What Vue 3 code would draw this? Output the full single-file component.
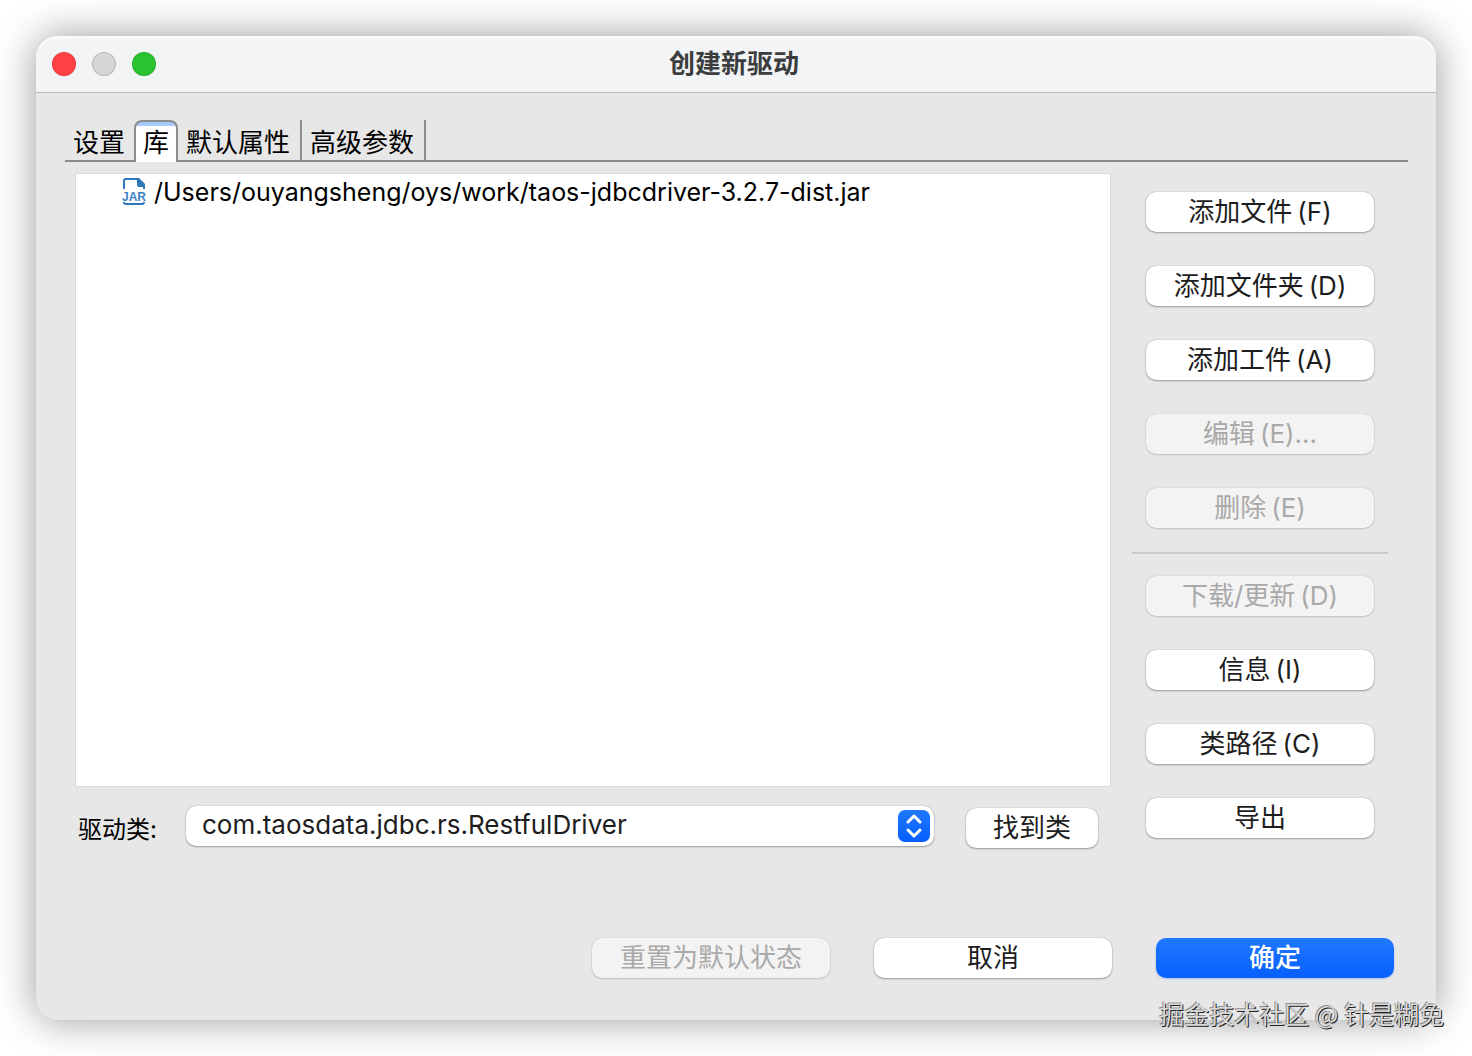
<script setup>
import { ref } from 'vue'

const tabs = ['设置', '库', '默认属性', '高级参数']
const activeTab = ref('库')
const libraries = ['/Users/ouyangsheng/oys/work/taos-jdbcdriver-3.2.7-dist.jar']
const driverClass = ref('com.taosdata.jdbc.rs.RestfulDriver')

const fileActions = [
  { label: '添加文件', key: '(F)' },
  { label: '添加文件夹', key: '(D)' },
  { label: '添加工件', key: '(A)' },
  { label: '编辑', key: '(E)...', disabled: true },
  { label: '删除', key: '(E)', disabled: true },
]
const infoActions = [
  { label: '下载/更新', key: '(D)', disabled: true },
  { label: '信息', key: '(I)' },
  { label: '类路径', key: '(C)' },
  { label: '导出', key: '' },
]
</script>

<template>
  <div class="desktop">
    <main class="window" role="dialog" aria-labelledby="dialog-title">
      <header class="titlebar">
        <div class="lights">
          <button class="light close" type="button" aria-label="关闭"></button>
          <button class="light minimize" type="button" aria-label="最小化" disabled></button>
          <button class="light zoom" type="button" aria-label="缩放"></button>
        </div>
        <h1 id="dialog-title">创建新驱动</h1>
      </header>

      <div class="tabs" role="tablist">
        <button
          v-for="tab in tabs"
          :key="tab"
          type="button"
          role="tab"
          class="tab"
          :class="{ active: tab === activeTab }"
          :aria-selected="tab === activeTab"
          @click="activeTab = tab"
        >{{ tab }}</button>
      </div>

      <section class="content">
        <div class="library">
          <ul class="files">
            <li v-for="path in libraries" :key="path">
              <svg class="jar" viewBox="0 0 24 28" width="24" height="28" aria-hidden="true">
                <path d="M2 11V3Q2 1 4 1H16L22 7V11" fill="none" stroke="#2f77bd" stroke-width="2" />
                <path d="M15 0H17L23 6V9H17Q15 9 15 7Z" fill="#2f77bd" />
                <path d="M2 24Q2 26 4 26H20Q22 26 22 24" fill="none" stroke="#2f77bd" stroke-width="2" />
                <text x="12" y="23" text-anchor="middle" font-family="Liberation Sans, sans-serif" font-size="12" font-weight="bold" fill="#3d82c4">JAR</text>
              </svg>
              <span>{{ path }}</span>
            </li>
          </ul>
          <div class="driver">
            <label for="driver-class">驱动类:</label>
            <div class="combo">
              <select id="driver-class" v-model="driverClass">
                <option>com.taosdata.jdbc.rs.RestfulDriver</option>
              </select>
              <svg class="chevrons" viewBox="0 0 32 32" width="32" height="32" aria-hidden="true">
                <defs>
                  <linearGradient id="knob" x1="0" y1="0" x2="0" y2="1">
                    <stop offset="0" stop-color="#2079ff" />
                    <stop offset="1" stop-color="#065ffe" />
                  </linearGradient>
                </defs>
                <rect width="32" height="32" rx="7" fill="url(#knob)" />
                <path d="M10 12L16 6L22 12M10 20L16 26L22 20" fill="none" stroke="#fff" stroke-width="3" stroke-linecap="round" stroke-linejoin="round" />
              </svg>
            </div>
            <button class="btn find" type="button">找到类</button>
          </div>
        </div>

        <div class="actions">
          <div class="group">
            <button v-for="a in fileActions" :key="a.label" class="btn" type="button" :disabled="a.disabled">{{ a.label }}<span class="key">{{ a.key }}</span></button>
          </div>
          <hr />
          <div class="group">
            <button v-for="a in infoActions" :key="a.label" class="btn" type="button" :disabled="a.disabled">{{ a.label }}<span v-if="a.key" class="key">{{ a.key }}</span></button>
          </div>
        </div>
      </section>

      <footer class="footer">
        <button class="btn" type="button" disabled>重置为默认状态</button>
        <button class="btn" type="button">取消</button>
        <button class="btn primary" type="button">确定</button>
      </footer>
    </main>
    <p class="credit">掘金技术社区 @ 针是糊兔</p>
  </div>
</template>

<style>
body {
  margin: 0;
  background: #fff;
}
</style>

<style scoped>
.desktop {
  position: relative;
  display: flex;
  min-height: 100vh;
  padding: 36px;
  box-sizing: border-box;
  overflow: hidden;
  font-family: Inter, "Noto Sans CJK SC", sans-serif;
  font-size: 26px;
  line-height: 36px;
  color: #000;
}
button,
select {
  margin: 0;
  padding: 0;
  border: 0;
  font: inherit;
  color: inherit;
}
.window {
  flex: 1;
  min-width: 0;
  display: flex;
  flex-direction: column;
  border-radius: 22px;
  background: #e7e7e7;
  box-shadow: 0 0 40px rgba(0, 0, 0, 0.4);
}
.titlebar {
  position: relative;
  display: flex;
  align-items: center;
  justify-content: center;
  height: 56px;
  border-bottom: 1px solid #b4b7b8;
  border-radius: 22px 22px 0 0;
  background: #f2f4f5;
  box-shadow: inset 0 2px 1px #fafbfb;
}
.lights {
  position: absolute;
  left: 16px;
  display: flex;
  gap: 16px;
}
.light {
  width: 24px;
  height: 24px;
  border-radius: 50%;
  box-shadow: inset 0 0 0 1px rgba(0, 0, 0, 0.12);
}
.close { background: #ff4245; }
.minimize { background: #d3d5d6; }
.zoom { background: #29c231; }
h1 {
  margin: 0;
  padding-right: 4px;
  font-size: 26px;
  line-height: 36px;
  font-weight: 700;
  color: #3c3d3e;
}
.tabs {
  display: flex;
  height: 40px;
  margin: 27px 28px 0 29px;
  border-bottom: 2px solid #8c8c8c;
}
.tab {
  padding: 5px 10px 0 8px;
  border-right: 2px solid #8c8c8c;
  background: none;
  white-space: nowrap;
}
.tab:first-child {
  padding-right: 9px;
  border-right: 0;
}
.tab.active {
  height: 42px;
  padding: 2px 7px 0;
  border: 2px solid #8c8c8c;
  border-bottom: 0;
  border-radius: 8px 8px 0 0;
  background: linear-gradient(#a5cbff 4px, #fff 4px);
}
.content {
  flex: 1;
  display: flex;
  gap: 21px;
  padding: 11px 48px 0 39px;
}
.library {
  flex: 1;
  min-width: 0;
  display: flex;
  flex-direction: column;
}
.files {
  flex: 1;
  margin: 0;
  padding: 0 0 0 46px;
  border: 1px solid #dadada;
  background: #fff;
  font-size: 25px;
  list-style: none;
}
.files li {
  display: flex;
  align-items: center;
  gap: 8px;
}
.driver {
  display: flex;
  align-items: flex-end;
  margin: 19px 13px 0 3px;
}
.driver label {
  width: 108px;
  font-size: 24px;
}
.combo {
  position: relative;
  flex: 1;
  display: flex;
  margin: 0 32px 2px 0;
}
.combo select {
  width: 100%;
  height: 40px;
  padding: 0 44px 2px 16px;
  border-radius: 10px;
  appearance: none;
  background: #fff;
  color: #1d1d1d;
  box-shadow: 0 0 1px rgba(0, 0, 0, 0.4), 0 1px 2px rgba(0, 0, 0, 0.3);
}
.chevrons {
  position: absolute;
  top: 4px;
  right: 4px;
  pointer-events: none;
}
.btn {
  height: 40px;
  padding-bottom: 1px;
  border-radius: 10px;
  background: #fff;
  color: #1d1d1d;
  white-space: nowrap;
  box-shadow: 0 0 1px rgba(0, 0, 0, 0.4), 0 1px 2px rgba(0, 0, 0, 0.3);
}
.btn:disabled {
  background: #f3f3f3;
  color: #a9a9a9;
  box-shadow: 0 0 1px rgba(0, 0, 0, 0.25), 0 1px 2px rgba(0, 0, 0, 0.15);
}
.btn.primary {
  background: linear-gradient(#2079ff, #065ffe);
  color: #fff;
  font-weight: 500;
  box-shadow: 0 1px 2px rgba(6, 95, 254, 0.3);
}
.key {
  margin-left: 5px;
}
.find {
  width: 132px;
}
.actions {
  width: 256px;
  padding-top: 19px;
}
.group {
  display: flex;
  flex-direction: column;
  gap: 34px;
  padding: 0 14px;
}
hr {
  height: 2px;
  margin: 24px 0 22px;
  border: 0;
  background: #cbcbcb;
}
.footer {
  display: flex;
  justify-content: flex-end;
  gap: 44px;
  padding: 90px 42px 42px;
}
.footer .btn {
  width: 238px;
}
.credit {
  position: absolute;
  right: 28px;
  bottom: 25px;
  margin: 0;
  font-family: "Noto Sans CJK SC", sans-serif;
  font-size: 25px;
  line-height: 36px;
  color: #d8d8d8;
  text-shadow: 1px 1px 0 #222, -1px -1px 0 rgba(0, 0, 0, 0.4);
}
</style>
